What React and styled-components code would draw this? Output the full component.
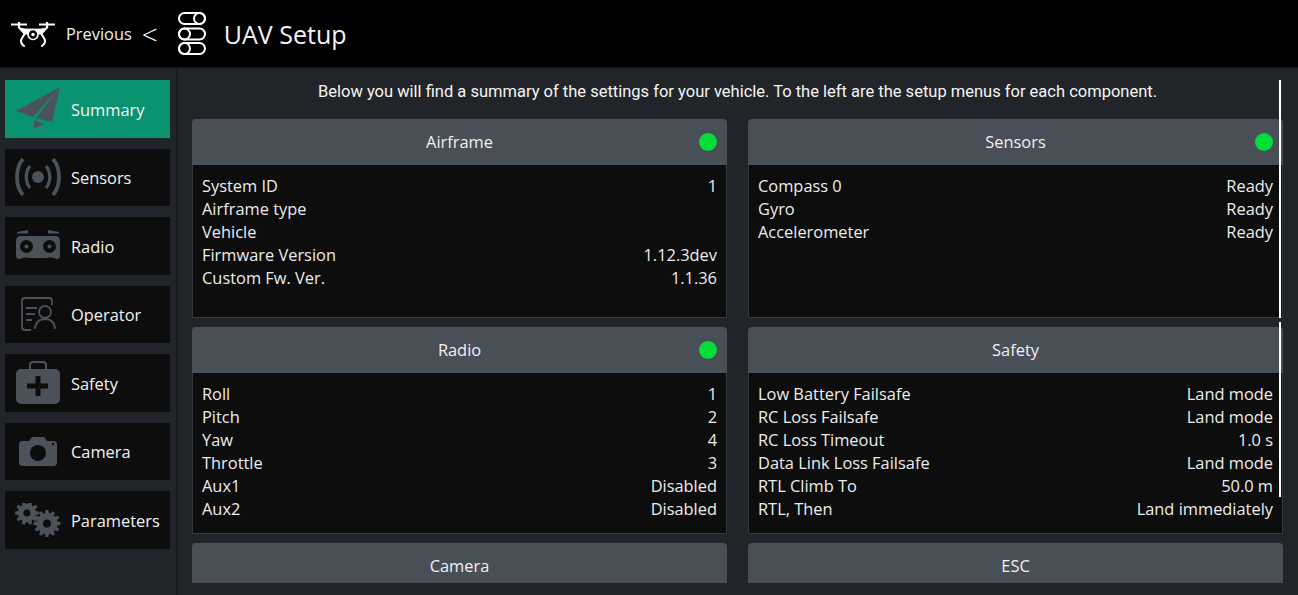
import styled, { createGlobalStyle } from "styled-components";

const GlobalStyle = createGlobalStyle`
  html, body {
    margin: 0;
    padding: 0;
    background: #212529;
    font-family: "Open Sans", "Liberation Sans", sans-serif;
  }
  * { box-sizing: border-box; }
`;

function DroneIcon() {
  return (
    <svg width="44" height="25" viewBox="0 0 44 25" fill="none" stroke="#fff">
      <path d="M0 2.500h16M28 2.500h16" strokeWidth="1.800" />
      <path d="M8 0v6M36 0v6" strokeWidth="2.200" />
      <path d="M7 5.500l7 1.500h16l7-1.500-6 6.500H13z" fill="#fff" strokeWidth="0.800" />
      <circle cx="22" cy="12.500" r="5" fill="#000" strokeWidth="1.600" />
      <circle cx="22" cy="12.500" r="1.700" fill="#fff" stroke="none" />
      <path d="M14 11c-1 3-4 5-4 8s1.500 4 3 5M30 11c1 3 4 5 4 8s-1.500 4-3 5" strokeWidth="2" strokeLinecap="round" />
    </svg>
  );
}

function SetupIcon() {
  return (
    <svg width="28" height="43" viewBox="0 0 28 43" fill="none" stroke="#fff" strokeWidth="2">
      <rect x="1" y="1" width="26" height="11" rx="5.500" />
      <circle cx="21.500" cy="6.500" r="5.500" />
      <rect x="1" y="16.500" width="26" height="11" rx="5.500" />
      <circle cx="6.500" cy="22" r="5.500" />
      <rect x="1" y="31" width="26" height="11" rx="5.500" />
      <circle cx="6.500" cy="36.500" r="5.500" />
    </svg>
  );
}

const ICON = "#4b5259";

function PlaneIcon() {
  return (
    <svg width="44" height="43" viewBox="0 0 44 43" fill={ICON}>
      <path d="M44 0L0 24l17 6L44 0z" />
      <path d="M44 0L20 31l16 4L44 0z" />
      <path d="M18 33v9l10-5z" />
    </svg>
  );
}

function SensorsIcon() {
  return (
    <svg width="46" height="38" viewBox="0 0 46 38" fill="none" stroke={ICON}>
      <circle cx="23" cy="19" r="6" fill={ICON} stroke="none" />
      <path d="M15 8c-5 6-5 16 0 22M31 8c5 6 5 16 0 22" strokeWidth="3.200" />
      <path d="M8 1C0 10 0 28 8 37M38 1c8 9 8 27 0 36" strokeWidth="3.800" />
    </svg>
  );
}

function RadioIcon() {
  return (
    <svg width="46" height="31" viewBox="0 0 46 31" fill={ICON}>
      <path d="M2 2l11-2v3.500H2zM44 2L33 0v3.500h11z" />
      <path d="M6 6h34c3 0 5 2 5 5v15c0 2-1 3-3 3-4-1-7-2-10-1H14c-3-1-6 0-10 1-2 0-3-1-3-3V11c0-3 2-5 5-5z" />
      <circle cx="11.500" cy="16.500" r="6.500" fill="#0d0d0d" />
      <circle cx="11.500" cy="16.500" r="2" />
      <circle cx="34.500" cy="16.500" r="6.500" fill="#0d0d0d" />
      <circle cx="34.500" cy="16.500" r="2" />
    </svg>
  );
}

function OperatorIcon() {
  return (
    <svg width="36" height="34" viewBox="0 0 36 34" fill="none" stroke={ICON} strokeWidth="1.800">
      <path d="M32 8V4c0-2-1-3-3-3H5C3 1 2 2 2 4v26c0 2 1 3 3 3h6" />
      <path d="M6 11h11M6 17h9M6 23h6" />
      <circle cx="25" cy="15" r="6" />
      <path d="M15 32c0-6 4-10 10-10s10 4 10 10" />
    </svg>
  );
}

function SafetyIcon() {
  return (
    <svg width="46" height="43" viewBox="0 0 46 43" fill={ICON}>
      <path d="M15 9V4c0-2 1-3 3-3h10c2 0 3 1 3 3v5" fill="none" stroke={ICON} strokeWidth="2" />
      <rect x="1" y="8" width="44" height="35" rx="5" />
      <path d="M20.500 15h5v7.500H33v5h-7.500V35h-5v-7.500H12v-5h8.500z" fill="#0d0d0d" />
    </svg>
  );
}

function CameraIcon() {
  return (
    <svg width="38" height="30" viewBox="0 0 38 30" fill={ICON}>
      <path d="M3 5h7l3-4h12l3 4h7c1.500 0 3 1.500 3 3v19c0 1.500-1.500 3-3 3H3c-1.500 0-3-1.500-3-3V8c0-1.500 1.500-3 3-3z" />
      <circle cx="19" cy="17" r="8" fill="#0d0d0d" />
      <circle cx="34" cy="8" r="1.200" fill="#0d0d0d" />
    </svg>
  );
}

function gearPath(cx, cy, outer, inner, teeth) {
  const step = (Math.PI * 2) / teeth;
  let d = "";
  for (let i = 0; i < teeth; i++) {
    const a = i * step;
    const pts = [
      [inner, a - step * 0.36],
      [outer, a - step * 0.2],
      [outer, a + step * 0.2],
      [inner, a + step * 0.36],
    ];
    pts.forEach(([r, t], j) => {
      const x = (cx + r * Math.cos(t)).toFixed(2);
      const y = (cy + r * Math.sin(t)).toFixed(2);
      d += `${i === 0 && j === 0 ? "M" : "L"}${x} ${y}`;
    });
  }
  return d + "Z";
}

function GearsIcon() {
  return (
    <svg width="46" height="34" viewBox="0 0 46 34" fill={ICON}>
      <path d={gearPath(12, 10, 12, 9, 10)} />
      <circle cx="12" cy="10" r="3.500" fill="#0d0d0d" />
      <path d={gearPath(32, 20.500, 13.500, 10.500, 12)} />
      <circle cx="32" cy="20.500" r="4" fill="#0d0d0d" />
    </svg>
  );
}

const menu = [
  { label: "Summary", icon: <PlaneIcon />, active: true },
  { label: "Sensors", icon: <SensorsIcon /> },
  { label: "Radio", icon: <RadioIcon /> },
  { label: "Operator", icon: <OperatorIcon /> },
  { label: "Safety", icon: <SafetyIcon /> },
  { label: "Camera", icon: <CameraIcon /> },
  { label: "Parameters", icon: <GearsIcon /> },
];

const cards = [
  {
    title: "Airframe",
    ok: true,
    rows: [
      ["System ID", "1"],
      ["Airframe type", ""],
      ["Vehicle", ""],
      ["Firmware Version", "1.12.3dev"],
      ["Custom Fw. Ver.", "1.1.36"],
    ],
  },
  {
    title: "Sensors",
    ok: true,
    rows: [
      ["Compass 0", "Ready"],
      ["Gyro", "Ready"],
      ["Accelerometer", "Ready"],
    ],
  },
  {
    title: "Radio",
    ok: true,
    rows: [
      ["Roll", "1"],
      ["Pitch", "2"],
      ["Yaw", "4"],
      ["Throttle", "3"],
      ["Aux1", "Disabled"],
      ["Aux2", "Disabled"],
    ],
  },
  {
    title: "Safety",
    rows: [
      ["Low Battery Failsafe", "Land mode"],
      ["RC Loss Failsafe", "Land mode"],
      ["RC Loss Timeout", "1.0 s"],
      ["Data Link Loss Failsafe", "Land mode"],
      ["RTL Climb To", "50.0 m"],
      ["RTL, Then", "Land immediately"],
    ],
  },
  { title: "Camera", rows: [] },
  { title: "ESC", rows: [] },
];

export default function App() {
  return (
    <Page>
      <GlobalStyle />
      <TopBar>
        <DroneSlot><DroneIcon /></DroneSlot>
        <BackLabel>Previous</BackLabel>
        <Chevron>&lt;</Chevron>
        <SetupSlot><SetupIcon /></SetupSlot>
        <Title>UAV Setup</Title>
      </TopBar>
      <Body>
        <SideMenu>
          {menu.map((item) => (
            <MenuItem key={item.label} $active={item.active}>
              <MenuIcon>{item.icon}</MenuIcon>
              <MenuLabel>{item.label}</MenuLabel>
            </MenuItem>
          ))}
        </SideMenu>
        <Content>
          <Intro>
            Below you will find a summary of the settings for your vehicle. To the left are the setup menus for each component.
          </Intro>
          <CardGrid>
            {cards.map((card) => (
              <Card key={card.title}>
                <CardHeader>
                  {card.title}
                  {card.ok && <StatusDot />}
                </CardHeader>
                {card.rows.length > 0 && (
                  <CardBody>
                    {card.rows.map(([name, value]) => (
                      <Row key={name}>
                        <span>{name}</span>
                        <span>{value}</span>
                      </Row>
                    ))}
                  </CardBody>
                )}
              </Card>
            ))}
          </CardGrid>
          <ScrollMark $top={0} $height={238} />
          <ScrollMark $top={242} $height={175} />
        </Content>
      </Body>
    </Page>
  );
}

const Page = styled.div`
  width: 1298px;
  height: 595px;
  overflow: hidden;
  display: flex;
  flex-direction: column;
  background: #212529;
  color: #fff;
`;

const TopBar = styled.header`
  height: 68px;
  flex: none;
  background: #000;
  display: flex;
  align-items: center;
  border-bottom: 1px solid #16181a;
`;

const DroneSlot = styled.div`
  display: flex;
  margin: 1px 0 0 11px;
  width: 55px;
`;

const BackLabel = styled.span`
  font-size: 16.400px;
  color: #f0f0f0;
`;

const Chevron = styled.span`
  font-size: 28px;
  margin-left: 10px;
  line-height: 1;
  font-weight: 300;
`;

const SetupSlot = styled.div`
  display: flex;
  margin-left: 20px;
`;

const Title = styled.h1`
  margin: 0 0 0 18px;
  font-size: 25px;
  font-weight: 400;
  color: #f4f4f4;
`;

const Body = styled.div`
  flex: 1;
  display: flex;
  min-height: 0;
`;

const SideMenu = styled.nav`
  width: 178px;
  flex: none;
  padding: 12px 6px 0 5px;
  border-right: 2px solid #191c1f;
  display: flex;
  flex-direction: column;
  gap: 11px;
`;

const MenuItem = styled.div`
  height: 57.500px;
  flex: none;
  display: flex;
  align-items: center;
  padding-left: 10px;
  font-size: 16.400px;
  color: #f2f2f2;
  background: ${(p) => (p.$active ? "#0a9370" : "#0d0d0d")};
`;

const MenuIcon = styled.div`
  width: 46px;
  margin-right: 10px;
  display: flex;
  align-items: center;
  justify-content: center;
`;

const MenuLabel = styled.span`
  padding-top: 1px;
`;

const Content = styled.main`
  position: relative;
  flex: none;
  width: 1120px;
  height: 503px;
  margin-top: 12px;
  padding-left: 14px;
  overflow: hidden;
`;

const Intro = styled.p`
  margin: 0;
  width: 1091px;
  height: 39px;
  font-family: Roboto, "Liberation Sans", sans-serif;
  font-size: 16.500px;
  line-height: 23px;
  text-align: center;
  color: #f4f4f4;
`;

const CardGrid = styled.div`
  width: 1091px;
  display: grid;
  grid-template-columns: 535px 535px;
  grid-template-rows: 199px 207px auto;
  column-gap: 21px;
  row-gap: 9px;
`;

const Card = styled.section`
  display: flex;
  flex-direction: column;
`;

const CardHeader = styled.div`
  position: relative;
  height: 46px;
  flex: none;
  display: flex;
  align-items: center;
  justify-content: center;
  padding-bottom: 2px;
  background: #484f57;
  border-radius: 4px 4px 0 0;
  font-size: 16.400px;
  color: #f0f0f0;
`;

const StatusDot = styled.i`
  position: absolute;
  right: 10px;
  top: 14px;
  width: 18px;
  height: 18px;
  border-radius: 50%;
  background: #04dc3a;
`;

const CardBody = styled.div`
  flex: 1;
  padding: 9px 9px 0 9px;
  background: #0d0d0d;
  border: 1px solid #33383d;
  border-top: none;
`;

const Row = styled.div`
  display: flex;
  justify-content: space-between;
  height: 23px;
  font-size: 16.400px;
  line-height: 23px;
  color: #ececec;
`;

const ScrollMark = styled.div`
  position: absolute;
  right: 17px;
  top: ${(p) => p.$top}px;
  width: 2px;
  height: ${(p) => p.$height}px;
  background: #fff;
`;
